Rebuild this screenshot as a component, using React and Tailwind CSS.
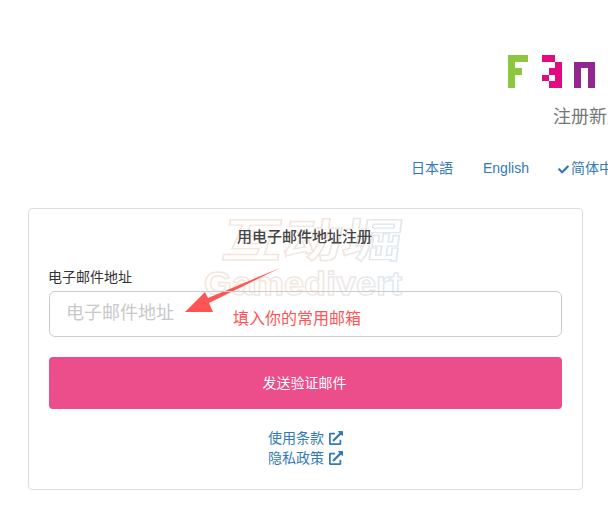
import React from 'react';
import { FaCheck, FaExternalLinkAlt } from 'react-icons/fa';

const cjk = "font-['Liberation_Sans','Noto_Sans_CJK_SC',sans-serif]";

function Logo() {
  return (
    <svg width="88" height="33" viewBox="0 0 88 33" className="block shrink-0" shapeRendering="crispEdges">
      <path d="M0 0h20v6.600h-13.400v6.600h7v6.600h-7v13.200h-6.600z" fill="#8dc63f" />
      <path d="M34 0h13v6.600h-13zM47 6.600h6.600v26.400h-13v-6.600h-6.600v-6.600h6.600v6.600h6.400v-6.600h-6.400v-6.600h6.400z" fill="#e5097f" />
      <path d="M66.400 6.600h20.600v26.400h-6.600v-19.800h-7.400v19.800h-6.600z" fill="#92278f" />
    </svg>
  );
}

function Watermark() {
  return (
    <svg width="205" height="92" viewBox="0 0 205 92" className="absolute left-[174px] top-[2px] pointer-events-none select-none">
      <defs>
        <linearGradient id="wm" x1="0" x2="1" y1="0" y2="0">
          <stop offset="0" stopColor="#f5e6dc" />
          <stop offset="0.6" stopColor="#efe7e2" />
          <stop offset="1" stopColor="#dfe9f1" />
        </linearGradient>
      </defs>
      <text x="17" y="46" transform="skewX(-8) translate(7 0)" textLength="180" lengthAdjust="spacingAndGlyphs" fontSize="46" fontWeight="700" fontFamily="'Noto Sans CJK SC', sans-serif" fill="#ffffff" stroke="url(#wm)" strokeWidth="1.4">互动堀</text>
      <text x="1" y="84" textLength="198" lengthAdjust="spacingAndGlyphs" fontSize="33" fontWeight="700" fontFamily="'Liberation Sans', sans-serif" fill="#ffffff" stroke="url(#wm)" strokeWidth="1.4">Gamedivert</text>
    </svg>
  );
}

function Arrow() {
  return (
    <svg width="96" height="46" viewBox="0 0 96 46" className="absolute left-[156px] top-[59px]">
      <path d="M95 0L24 35L28 44L0 44L20 24L23 30Z" fill="#ff5454" />
    </svg>
  );
}

export default function App() {
  return (
    <div className={`w-[608px] h-[505px] overflow-hidden bg-white ${cjk}`}>
      <div className="h-[55px]" />
      <div className="pl-[508px] w-[700px]">
        <Logo />
      </div>
      <div className="pl-[553px] w-[700px] mt-[17px] text-[18px] leading-[24px] text-[#777777] whitespace-nowrap">注册新用户</div>

      <div className="mt-[29px] pl-[411px] w-[800px] flex items-center text-[14px] leading-[20px] text-[#337ab7] whitespace-nowrap">
        <span>日本語</span>
        <span className="ml-[30px]">English</span>
        <span className="ml-[29px] flex items-center">
          <FaCheck size={11} className="mr-[2px] mt-[2px]" />
          简体中文
        </span>
      </div>

      <div className="relative mt-[30px] ml-[28px] w-[555px] h-[282px] border border-[#dddddd] rounded-[4px] px-[20px]">
        <Watermark />
        <Arrow />
        <div className="relative pt-[18px] pr-[2px] text-center text-[15px] leading-[20px] font-medium text-[#444444]">用电子邮件地址注册</div>
        <div className="relative mt-[21px] ml-[-1px] text-[14px] leading-[18px] text-[#333333]">电子邮件地址</div>
        <div className="relative mt-[5px] h-[46px] border border-[#cccccc] rounded-[6px] flex items-center">
          <span className="pl-[16px] pb-[2px] text-[18px] text-[#c9c9c9]">电子邮件地址</span>
          <span className="pl-[59px] pt-[9px] text-[16px] text-[#ff5454]">填入你的常用邮箱</span>
        </div>
        <button className="relative mt-[20px] pr-[2px] w-full h-[52px] rounded-[4px] bg-[#ec4d8b] text-white text-[14px]">发送验证邮件</button>
        <div className="relative mt-[19px] flex flex-col items-center text-[14px] leading-[20px] text-[#337ab7]">
          <span className="flex items-center gap-[5px]">使用条款 <FaExternalLinkAlt size={14} /></span>
          <span className="flex items-center gap-[5px]">隐私政策 <FaExternalLinkAlt size={14} /></span>
        </div>
      </div>
    </div>
  );
}
